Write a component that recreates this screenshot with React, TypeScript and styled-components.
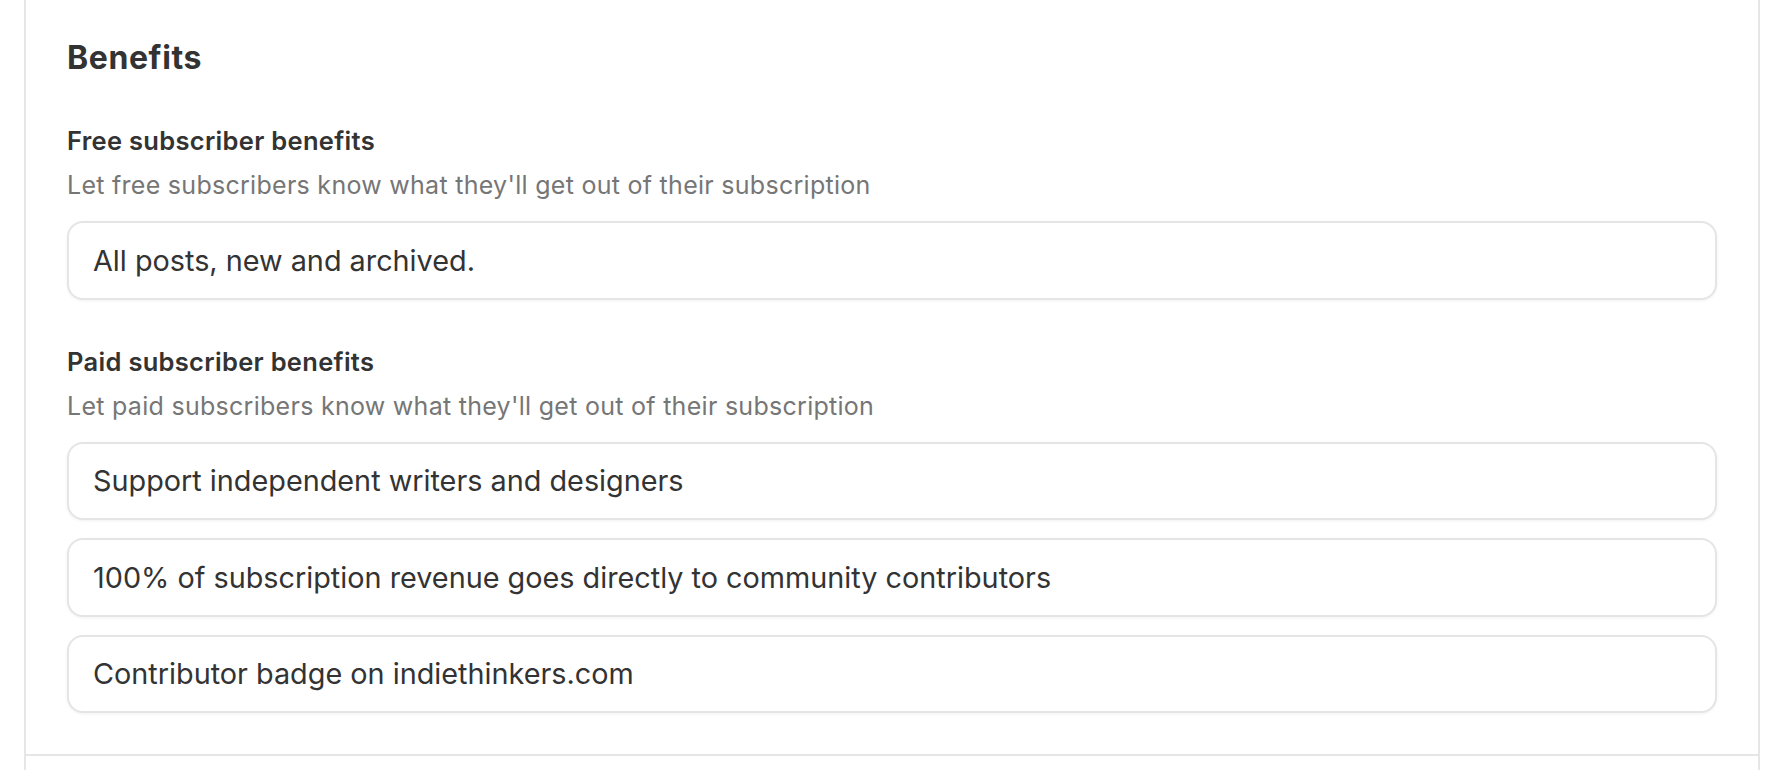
import React from 'react';
import styled, { createGlobalStyle } from 'styled-components';

const GlobalStyle = createGlobalStyle`
  * {
    box-sizing: border-box;
  }

  html,
  body {
    margin: 0;
    padding: 0;
    background: #ffffff;
    font-family: Inter, "Noto Sans", "Liberation Sans", sans-serif;
    color: #333333;
    -webkit-font-smoothing: antialiased;
  }
`;

const Page = styled.main`
  width: 1790px;
  height: 770px;
  overflow: hidden;
  padding-left: 24px;
  background: #ffffff;
`;

const Card = styled.div`
  width: 1736px;
  min-height: 100%;
  border-left: 2px solid #e6e6e6;
  border-right: 2px solid #e6e6e6;
  background: #ffffff;
`;

const Section = styled.section`
  display: flex;
  flex-direction: column;
  padding: 39px 41px 41px;
  border-bottom: 2px solid #e6e6e6;
`;

const Heading = styled.h2`
  margin: 0 0 48px;
  font-size: 32px;
  line-height: 38px;
  font-weight: 700;
  letter-spacing: 0.6px;
  color: #333333;
`;

const Field = styled.div`
  display: flex;
  flex-direction: column;

  & + & {
    margin-top: 46px;
  }
`;

const Label = styled.label`
  font-size: 25.5px;
  line-height: 32px;
  font-weight: 600;
  letter-spacing: 0.3px;
  color: #333333;
`;

const Hint = styled.p`
  margin: 12px 0 20px;
  font-size: 25px;
  line-height: 32px;
  font-weight: 400;
  letter-spacing: 0.28px;
  color: #767676;
`;

const InputStack = styled.div`
  display: flex;
  flex-direction: column;
  gap: 18px;
`;

const BenefitInput = styled.input`
  width: 100%;
  height: 78.5px;
  padding: 0 24px;
  border: 2px solid #e5e5e5;
  border-radius: 16px;
  background: #ffffff;
  box-shadow: 0 1px 3px rgba(0, 0, 0, 0.06);
  font-family: Inter, "Noto Sans", "Liberation Sans", sans-serif;
  font-size: 28.8px;
  color: #333333;
  outline: none;
`;

const freeBenefits = ['All posts, new and archived.'];

const paidBenefits = [
  'Support independent writers and designers',
  '100% of subscription revenue goes directly to community contributors',
  'Contributor badge on indiethinkers.com',
];

const App: React.FC = () => {
  return (
    <>
      <GlobalStyle />
      <Page>
        <Card>
          <Section>
            <Heading>Benefits</Heading>

            <Field>
              <Label>Free subscriber benefits</Label>
              <Hint>Let free subscribers know what they'll get out of their subscription</Hint>
              <InputStack>
                {freeBenefits.map((item) => (
                  <BenefitInput key={item} type="text" defaultValue={item} />
                ))}
              </InputStack>
            </Field>

            <Field>
              <Label>Paid subscriber benefits</Label>
              <Hint>Let paid subscribers know what they'll get out of their subscription</Hint>
              <InputStack>
                {paidBenefits.map((item) => (
                  <BenefitInput key={item} type="text" defaultValue={item} />
                ))}
              </InputStack>
            </Field>
          </Section>
        </Card>
      </Page>
    </>
  );
};

export default App;
